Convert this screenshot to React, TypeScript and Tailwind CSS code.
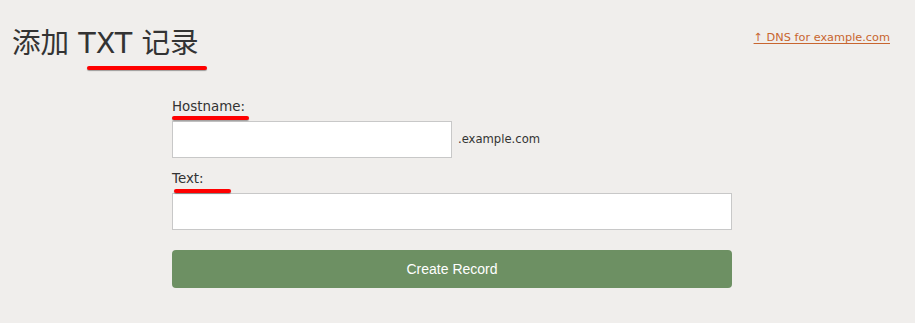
const Marker = ({ className }: { className: string }) => (
  <span
    className={`absolute h-[4px] rounded-full bg-[#f00] shadow-[0_1px_1px_rgba(0,0,0,0.35)] ${className}`}
  />
);

const FieldLabel = ({
  text,
  className,
  markerClass,
}: {
  text: string;
  className: string;
  markerClass: string;
}) => (
  <div className={`relative text-[13.4px] leading-[21px] text-[#333] ${className}`}>
    {text}
    <Marker className={markerClass} />
  </div>
);

const App = () => {
  return (
    <div
      className="min-h-[323px] w-full bg-[#f0eeec]"
      style={{ fontFamily: '"DejaVu Sans", "Noto Sans CJK SC", sans-serif' }}
    >
      <div className="flex items-start justify-between pl-[12px] pr-[25px] pt-[26px]">
        <h1 className="relative text-[28.6px] leading-[34px] text-[#333]">
          添加 TXT 记录
          <Marker className="left-[75px] top-[40px] w-[120px]" />
        </h1>
        <a
          href="#"
          className="mt-[4px] text-[11.3px] text-[#c8652f] underline underline-offset-2"
        >
          ↑ DNS for example.com
        </a>
      </div>

      <form className="ml-[172px] mt-[36px] w-[560px]">
        <FieldLabel
          text="Hostname:"
          className="h-[25px]"
          markerClass="left-0 top-[20px] w-[77px]"
        />
        <div className="flex items-center gap-[6px]">
          <input
            type="text"
            className="h-[37px] w-[280px] border border-[#c8c8c8] bg-white px-2 outline-none"
          />
          <span className="text-[11.6px] text-[#333]">.example.com</span>
        </div>

        <FieldLabel
          text="Text:"
          className="mt-[10px] h-[25px]"
          markerClass="left-[2px] top-[21px] h-[3px] w-[57px]"
        />
        <input
          type="text"
          className="h-[37px] w-full border border-[#c8c8c8] bg-white px-2 outline-none"
        />

        <button
          type="button"
          className="mt-[20px] h-[38px] w-full rounded-[4px] bg-[#6d9063] text-[14px] text-white"
          style={{ fontFamily: '"Liberation Sans", Arial, sans-serif' }}
        >
          Create Record
        </button>
      </form>
    </div>
  );
};

export default App;
